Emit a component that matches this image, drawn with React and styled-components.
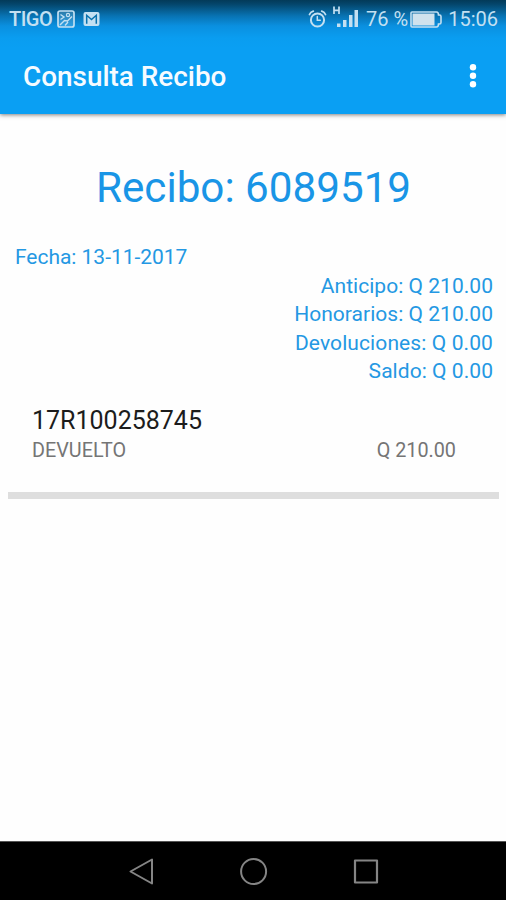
import React from "react";
import styled, { createGlobalStyle } from "styled-components";

const GlobalStyle = createGlobalStyle`
  * { box-sizing: border-box; }
  body {
    margin: 0;
    background: #fefefe;
    font-family: Roboto, "Liberation Sans", sans-serif;
  }
`;

const Screen = styled.div`
  display: flex;
  flex-direction: column;
  width: 506px;
  height: 900px;
  background: #fefefe;
  overflow: hidden;
`;

const Header = styled.header`
  flex: none;
  height: 114px;
  background: linear-gradient(#033a58 0, #04456a 4px, #0873b3 16px, #0a90e0 26px, #0a9df0 38px, #0a9ff3 48px);
  box-shadow: 0 1px 4px rgba(0, 0, 0, 0.5);
`;

const StatusBar = styled.div`
  display: flex;
  justify-content: space-between;
  height: 38px;
  padding: 0 8px 0 9px;
  color: #c3e0f2;
`;

const StatusGroup = styled.div`
  display: flex;
  align-items: center;
  height: 38px;
`;

const StatusText = styled.span`
  font-size: ${(p) => p.$size}px;
  font-weight: ${(p) => p.$weight || 400};
  letter-spacing: ${(p) => p.$spacing || 0}px;
  line-height: 38px;
  margin-left: ${(p) => p.$gap || 0}px;
  white-space: pre;
`;

const Icon = styled.svg`
  display: block;
  flex: none;
  margin-left: ${(p) => p.$gap || 0}px;
`;

const AppBar = styled.div`
  display: flex;
  align-items: center;
  justify-content: space-between;
  height: 76px;
  padding: 0 29px 0 23px;
`;

const AppTitle = styled.h1`
  margin: 0;
  padding-top: 2px;
  color: #f6fbff;
  font-size: 27.9px;
  font-weight: 500;
  line-height: 74px;
`;

const MenuButton = styled.button`
  display: flex;
  padding: 0;
  border: 0;
  background: none;
`;

const Content = styled.main`
  flex: 1;
  padding: 44px 7px 0 8px;
`;

const ReceiptTitle = styled.h2`
  margin: 0;
  color: #1995e6;
  font-size: 42.2px;
  font-weight: 400;
  line-height: 60px;
  text-align: center;
`;

const Summary = styled.section`
  display: flex;
  flex-direction: column;
  margin-top: 25px;
  padding: 0 6px 0 7px;
`;

const SummaryLine = styled.div`
  color: #2498e3;
  font-size: 21px;
  line-height: 28.6px;
  letter-spacing: ${(p) => p.$spacing || 0}px;
  text-align: ${(p) => p.$align || "right"};
`;

const Item = styled.section`
  height: 113px;
  padding: 20px 43px 0 24px;
  border-bottom: 7px solid #dedede;
`;

const ItemCode = styled.div`
  color: #1c1c1c;
  font-size: 25px;
  line-height: 30px;
`;

const ItemRow = styled.div`
  display: flex;
  justify-content: space-between;
  color: #757575;
  font-size: 19.8px;
  line-height: 30px;
`;

const NavBar = styled.nav`
  display: flex;
  flex: none;
  align-items: center;
  justify-content: center;
  gap: 84px;
  height: 59px;
  padding-left: 1px;
  background: #000;
  border-top: 1px solid #555;
`;

const PictureIcon = () => (
  <Icon $gap={5} width="18" height="18" viewBox="0 0 18 18" fill="none" stroke="currentColor">
    <rect x="1" y="1" width="16" height="16" rx="2" strokeWidth="1.7" fill="rgba(195,224,242,.2)" />
    <path d="M3.5 4.5L7 7L3.5 9.5M3 15l4.5-4.5 3 .5L15 6.5M11 12l-3 3.5" strokeWidth="1.4" />
    <circle cx="11" cy="5" r="1.6" strokeWidth="1.2" />
  </Icon>
);

const MailIcon = () => (
  <Icon $gap={8} width="17" height="14" viewBox="0 0 17 14">
    <rect x="0.5" width="16" height="14" rx="2" fill="currentColor" />
    <path d="M3.7 11.8V3.3L8.5 7.5L13.3 3.3V11.8" fill="none" stroke="#0871ae" strokeWidth="1.5" />
  </Icon>
);

const AlarmIcon = () => (
  <Icon width="19" height="20" viewBox="0 0 19 20" fill="none" stroke="currentColor" strokeLinecap="round">
    <circle cx="9.5" cy="11" r="6.6" strokeWidth="2" />
    <path d="M1.5 5.5Q2.5 3 5.3 2.2M17.5 5.5Q16.5 3 13.7 2.2" strokeWidth="1.8" />
    <path d="M9.3 7.5v3.8h3" strokeWidth="1.5" />
  </Icon>
);

const SignalIcon = () => (
  <Icon $gap={6} width="27" height="26" viewBox="0 0 27 26" fill="currentColor">
    <path d="M1 .5v7.5M6 .5v7.5M1 4.3h5" fill="none" stroke="currentColor" strokeWidth="1.7" />
    <rect x="4" y="17.5" width="3.5" height="3.5" />
    <rect x="10" y="14" width="3.5" height="7" />
    <rect x="16" y="9" width="3.5" height="12" />
    <rect x="21.5" y="4" width="3.5" height="17" />
  </Icon>
);

const BatteryIcon = () => (
  <Icon $gap={2} width="32" height="17" viewBox="0 0 32 17">
    <path d="M2 1h24.5q2 0 2 3h1q1.5 0 1.5 1.5v6q0 1.5-1.5 1.5h-1q0 3-2 3H2Q1 16 1 15V2Q1 1 2 1z" fill="none" stroke="currentColor" strokeWidth="1.6" />
    <rect x="2.5" y="2.5" width="22" height="12" fill="#d0e2ed" />
  </Icon>
);

const amounts = [
  { label: "Anticipo", value: "210.00", spacing: 0.03 },
  { label: "Honorarios", value: "210.00", spacing: 0.03 },
  { label: "Devoluciones", value: "0.00", spacing: 0.1 },
  { label: "Saldo", value: "0.00", spacing: 0.05 },
];

export default function App() {
  return (
    <Screen>
      <GlobalStyle />
      <Header>
        <StatusBar>
          <StatusGroup>
            <StatusText $size={20} $weight={500} $spacing={-0.5}>TIGO</StatusText>
            <PictureIcon />
            <MailIcon />
          </StatusGroup>
          <StatusGroup>
            <AlarmIcon />
            <SignalIcon />
            <StatusText $size={20} $gap={6}>76 %</StatusText>
            <BatteryIcon />
            <StatusText $size={20} $gap={6}>15:06</StatusText>
          </StatusGroup>
        </StatusBar>
        <AppBar>
          <AppTitle>Consulta Recibo</AppTitle>
          <MenuButton aria-label="Menú">
            <Icon width="8" height="24" viewBox="0 0 8 24" fill="#fff">
              <circle cx="4" cy="3.2" r="3.2" />
              <circle cx="4" cy="11.7" r="3.2" />
              <circle cx="4" cy="20.2" r="3.2" />
            </Icon>
          </MenuButton>
        </AppBar>
      </Header>
      <Content>
        <ReceiptTitle>Recibo: 6089519</ReceiptTitle>
        <Summary>
          <SummaryLine $align="left" $spacing={-0.03}>Fecha: 13-11-2017</SummaryLine>
          {amounts.map(({ label, value, spacing }) => (
            <SummaryLine key={label} $spacing={spacing}>{label}: Q {value}</SummaryLine>
          ))}
        </Summary>
        <Item>
          <ItemCode>17R100258745</ItemCode>
          <ItemRow>
            <span>DEVUELTO</span>
            <span>Q 210.00</span>
          </ItemRow>
        </Item>
      </Content>
      <NavBar>
        <Icon width="28" height="30" viewBox="0 0 28 30" fill="none" stroke="#858585" strokeWidth="2" strokeLinejoin="round">
          <path d="M2.5 15.5L24 3.5v24z" />
        </Icon>
        <Icon width="28" height="30" viewBox="0 0 28 30" fill="none" stroke="#858585" strokeWidth="2">
          <circle cx="13.6" cy="15.5" r="12.5" />
        </Icon>
        <Icon width="28" height="30" viewBox="0 0 28 30" fill="none" stroke="#858585" strokeWidth="2.2" strokeLinejoin="round">
          <rect x="3" y="4.5" width="22" height="22" />
        </Icon>
      </NavBar>
    </Screen>
  );
}
